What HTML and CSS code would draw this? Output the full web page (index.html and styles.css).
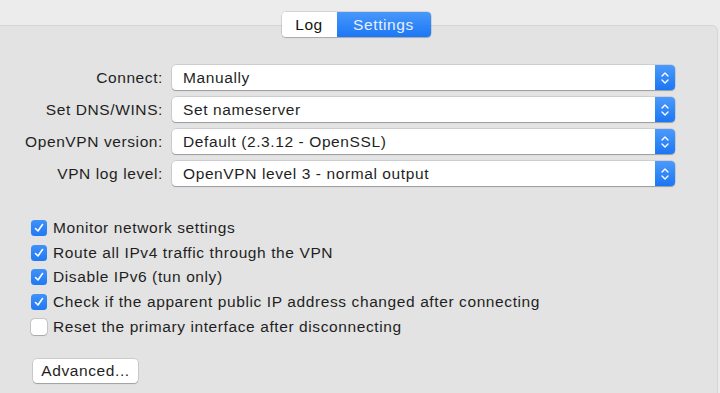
FILE: index.html
```html
<!DOCTYPE html>
<html>
<head>
<meta charset="utf-8">
<link rel="stylesheet" href="styles.css">
</head>
<body>
<div class="window">
  <div class="tabs">
    <div class="segmented">
      <span class="seg seg-off">Log</span>
      <span class="seg seg-on">Settings</span>
    </div>
  </div>
  <div class="panel">
    <div class="form">
      <label class="lbl">Connect:</label>
      <div class="popup"><span class="popup-text">Manually</span><span class="stepper"><svg width="10" height="14" viewBox="0 0 10 14"><path d="M2 5 L5 2 L8 5 M2 9 L5 12 L8 9" fill="none" stroke="#fff" stroke-width="1.4" stroke-linecap="round" stroke-linejoin="round"/></svg></span></div>
      <label class="lbl">Set DNS/WINS:</label>
      <div class="popup"><span class="popup-text">Set nameserver</span><span class="stepper"><svg width="10" height="14" viewBox="0 0 10 14"><path d="M2 5 L5 2 L8 5 M2 9 L5 12 L8 9" fill="none" stroke="#fff" stroke-width="1.4" stroke-linecap="round" stroke-linejoin="round"/></svg></span></div>
      <label class="lbl">OpenVPN version:</label>
      <div class="popup"><span class="popup-text">Default (2.3.12 - OpenSSL)</span><span class="stepper"><svg width="10" height="14" viewBox="0 0 10 14"><path d="M2 5 L5 2 L8 5 M2 9 L5 12 L8 9" fill="none" stroke="#fff" stroke-width="1.4" stroke-linecap="round" stroke-linejoin="round"/></svg></span></div>
      <label class="lbl">VPN log level:</label>
      <div class="popup"><span class="popup-text">OpenVPN level 3 - normal output</span><span class="stepper"><svg width="10" height="14" viewBox="0 0 10 14"><path d="M2 5 L5 2 L8 5 M2 9 L5 12 L8 9" fill="none" stroke="#fff" stroke-width="1.4" stroke-linecap="round" stroke-linejoin="round"/></svg></span></div>
    </div>
    <div class="checks">
      <div class="check"><span class="box on"><svg width="12" height="12" viewBox="0 0 12 12"><path d="M2.5 6.5 L5 9 L9.5 2.5" fill="none" stroke="#fff" stroke-width="1.6" stroke-linecap="round" stroke-linejoin="round"/></svg></span><span>Monitor network settings</span></div>
      <div class="check"><span class="box on"><svg width="12" height="12" viewBox="0 0 12 12"><path d="M2.5 6.5 L5 9 L9.5 2.5" fill="none" stroke="#fff" stroke-width="1.6" stroke-linecap="round" stroke-linejoin="round"/></svg></span><span>Route all IPv4 traffic through the VPN</span></div>
      <div class="check"><span class="box on"><svg width="12" height="12" viewBox="0 0 12 12"><path d="M2.5 6.5 L5 9 L9.5 2.5" fill="none" stroke="#fff" stroke-width="1.6" stroke-linecap="round" stroke-linejoin="round"/></svg></span><span>Disable IPv6 (tun only)</span></div>
      <div class="check"><span class="box on"><svg width="12" height="12" viewBox="0 0 12 12"><path d="M2.5 6.5 L5 9 L9.5 2.5" fill="none" stroke="#fff" stroke-width="1.6" stroke-linecap="round" stroke-linejoin="round"/></svg></span><span>Check if the apparent public IP address changed after connecting</span></div>
      <div class="check"><span class="box off"></span><span>Reset the primary interface after disconnecting</span></div>
    </div>
    <div class="actions">
      <span class="button">Advanced...</span>
    </div>
  </div>
</div>
</body>
</html>
```
FILE: styles.css
```css
html, body {
  margin: 0;
  padding: 0;
  height: 100%;
  background: #ececec;
  font-family: "Liberation Sans", Arial, sans-serif;
  font-size: 15.5px;
  letter-spacing: 0.6px;
  color: #1f1f1f;
  overflow: hidden;
}
.window {
  height: 100%;
  display: flex;
  flex-direction: column;
  padding-top: 12px;
  box-sizing: border-box;
}
.tabs {
  display: flex;
  justify-content: center;
  padding-right: 8px;
  margin-bottom: -12px;
  position: relative;
  z-index: 1;
}
.segmented {
  display: flex;
  height: 25px;
  border-radius: 4px;
  box-shadow: 0 0 0 0.5px rgba(0,0,0,0.2), 0 1px 1px rgba(0,0,0,0.18);
  overflow: hidden;
}
.seg {
  display: flex;
  align-items: center;
  justify-content: center;
}
.seg-off {
  width: 55px;
  background: #fff;
  color: #141414;
}
.seg-on {
  width: 94px;
  background: linear-gradient(#4898fa, #1c77f6);
  color: #e8f0ff;
}
.panel {
  flex: 1;
  margin-right: 2px;
  margin-left: -4px;
  padding-left: 4px;
  background: #e3e3e3;
  border-top: 1px solid #d4d4d4;
  border-right: 1px solid #d6d6d6;
  border-top-right-radius: 6px;
  padding-top: 39px;
}
.form {
  display: grid;
  grid-template-columns: 163px 503px;
  column-gap: 9px;
  row-gap: 7px;
  align-items: center;
}
.lbl {
  text-align: right;
  white-space: nowrap;
}
.popup {
  height: 25px;
  display: flex;
  align-items: stretch;
  background: #fff;
  border-radius: 4px;
  box-shadow: 0 0 0 0.5px rgba(0,0,0,0.18), 0 1px 1px rgba(0,0,0,0.25);
  overflow: hidden;
}
.popup-text {
  flex: 1;
  display: flex;
  align-items: center;
  padding-left: 11px;
}
.stepper {
  width: 20px;
  display: flex;
  align-items: center;
  justify-content: center;
  background: linear-gradient(#4c9bfa, #1b76f5);
}
.checks {
  display: flex;
  flex-direction: column;
  gap: 8.7px;
  padding-left: 31px;
  margin-top: 34px;
}
.check {
  display: flex;
  align-items: center;
  gap: 6px;
  height: 16px;
  white-space: nowrap;
}
.box {
  width: 16px;
  height: 16px;
  border-radius: 3.5px;
  box-sizing: border-box;
  display: flex;
  align-items: center;
  justify-content: center;
  flex: none;
}
.box.on {
  background: linear-gradient(#3f92f9, #2079f5);
}
.box.off {
  background: #fff;
  box-shadow: 0 0 0 0.5px rgba(0,0,0,0.25), 0 1px 1px rgba(0,0,0,0.15);
}
.actions {
  padding-left: 33px;
  margin-top: 24px;
}
.button {
  display: inline-flex;
  align-items: center;
  justify-content: center;
  width: 105px;
  height: 24px;
  background: #fff;
  border-radius: 4px;
  box-shadow: 0 0 0 0.5px rgba(0,0,0,0.2), 0 1px 1px rgba(0,0,0,0.22);
}
```
